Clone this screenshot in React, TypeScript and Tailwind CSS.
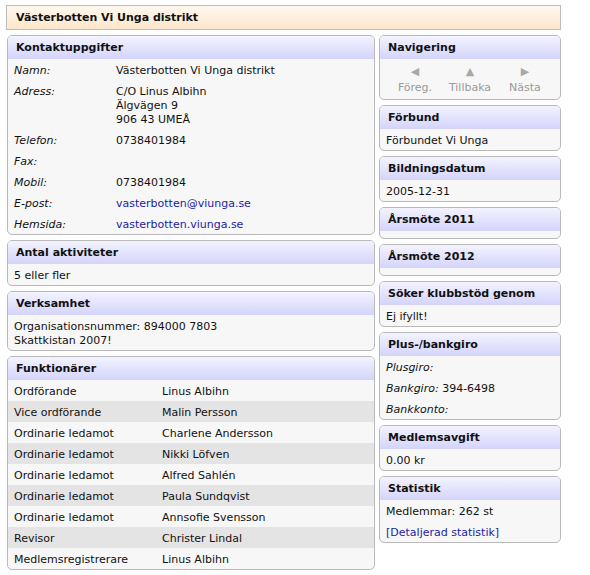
import React from 'react';

const FONT = { fontFamily: '"DejaVu Sans", Verdana, sans-serif' };

const Box: React.FC<{ title: string; children?: React.ReactNode }> = ({ title, children }) => (
  <div className="border border-[#b9b9b9] rounded-[5px] bg-[#f7f7f7] overflow-hidden">
    <div className="h-[23px] px-2 pt-[1px] flex items-center font-bold text-[11px] text-[#111] bg-gradient-to-b from-[#f3f3ff] to-[#d4d4fb]">
      {title}
    </div>
    {children ?? <div className="h-[7px]" />}
  </div>
);

const Row: React.FC<{ children: React.ReactNode; className?: string }> = ({ children, className = '' }) => (
  <div className={`px-[6px] pt-[5px] pb-[2px] leading-[14px] ${className}`}>{children}</div>
);

const contact: [string, React.ReactNode][] = [
  ['Namn:', 'Västerbotten Vi Unga distrikt'],
  ['Adress:', <>C/O Linus Albihn<br />Älgvägen 9<br />906 43 UMEÅ</>],
  ['Telefon:', '0738401984'],
  ['Fax:', ''],
  ['Mobil:', '0738401984'],
  ['E-post:', <span className="text-[#1c1ca6]">vasterbotten@viunga.se</span>],
  ['Hemsida:', <span className="text-[#1c1ca6]">vasterbotten.viunga.se</span>],
];

const officials = [
  ['Ordförande', 'Linus Albihn'],
  ['Vice ordförande', 'Malin Persson'],
  ['Ordinarie ledamot', 'Charlene Andersson'],
  ['Ordinarie ledamot', 'Nikki Löfven'],
  ['Ordinarie ledamot', 'Alfred Sahlén'],
  ['Ordinarie ledamot', 'Paula Sundqvist'],
  ['Ordinarie ledamot', 'Annsofie Svensson'],
  ['Revisor', 'Christer Lindal'],
  ['Medlemsregistrerare', 'Linus Albihn'],
];

export default function App() {
  return (
    <div className="w-[590px] h-[575px] bg-white text-[11px] text-[#111] pt-[5px] pl-[6px]" style={FONT}>
      <div className="w-[555px] h-[25px] border border-[#bcbcbc] bg-gradient-to-b from-[#fff8ee] to-[#fde6cb] px-[9px] pt-[1px] flex items-center font-bold">
        Västerbotten Vi Unga distrikt
      </div>

      <div className="flex items-start gap-[4px] mt-[5px] pl-[1px]">
        <div className="w-[368px] flex flex-col gap-[5px]">
          <Box title="Kontaktuppgifter">
            {contact.map(([k, v]) => (
              <Row key={k} className="flex">
                <div className="w-[102px] italic">{k}</div>
                <div>{v}</div>
              </Row>
            ))}
          </Box>
          <Box title="Antal aktiviteter">
            <Row>5 eller fler</Row>
          </Box>
          <Box title="Verksamhet">
            <Row>Organisationsnummer: 894000 7803<br />Skattkistan 2007!</Row>
          </Box>
          <Box title="Funktionärer">
            {officials.map(([role, name], i) => (
              <Row key={i} className={`flex ${i % 2 === 1 ? 'bg-[#e4e4e4]' : ''}`}>
                <div className="w-[148px]">{role}</div>
                <div>{name}</div>
              </Row>
            ))}
          </Box>
        </div>

        <div className="w-[182px] flex flex-col gap-[5px]">
          <Box title="Navigering">
            <div className="flex justify-center text-[#9a9a9a] pt-[6px] pb-[2px]">
              {[['◀', 'Föreg.'], ['▲', 'Tillbaka'], ['▶', 'Nästa']].map(([a, l]) => (
                <div key={l} className="w-[55px] flex flex-col items-center">
                  <span className="text-[11px] leading-[14px] text-[#a8a8a8]">{a}</span>
                  <span className="leading-[18px]">{l}</span>
                </div>
              ))}
            </div>
          </Box>
          <Box title="Förbund">
            <Row>Förbundet Vi Unga</Row>
          </Box>
          <Box title="Bildningsdatum">
            <Row>2005-12-31</Row>
          </Box>
          <Box title="Årsmöte 2011" />
          <Box title="Årsmöte 2012" />
          <Box title="Söker klubbstöd genom">
            <Row>Ej ifyllt!</Row>
          </Box>
          <Box title="Plus-/bankgiro">
            <Row><i>Plusgiro:</i></Row>
            <Row><i>Bankgiro:</i> 394-6498</Row>
            <Row><i>Bankkonto:</i></Row>
          </Box>
          <Box title="Medlemsavgift">
            <Row>0.00 kr</Row>
          </Box>
          <Box title="Statistik">
            <Row>Medlemmar: 262 st</Row>
            <Row><span className="text-[#1c1ca6]">[Detaljerad statistik]</span></Row>
          </Box>
        </div>
      </div>
    </div>
  );
}
